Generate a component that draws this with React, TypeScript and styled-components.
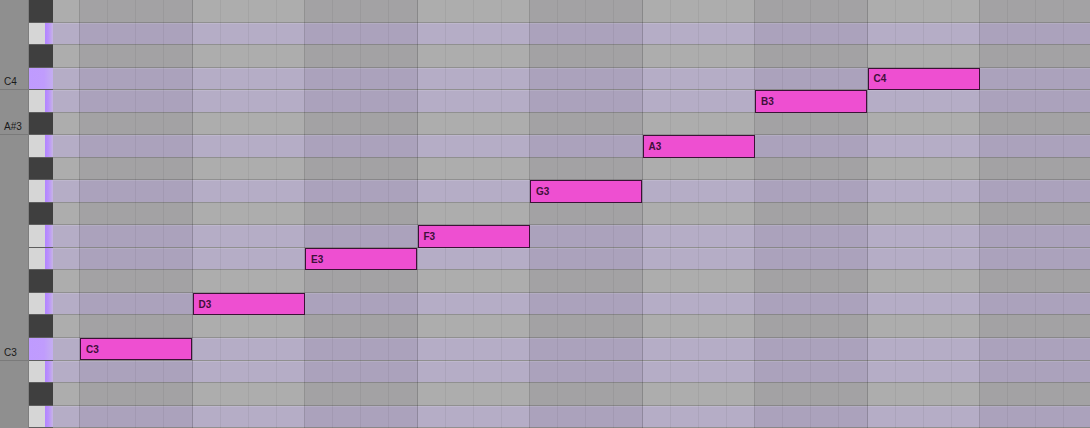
import styled, { createGlobalStyle, css } from "styled-components";

const GlobalStyle = createGlobalStyle`
  html, body {
    margin: 0;
    padding: 0;
    background: #999;
  }
  body {
    font-family: "Liberation Sans", Arial, sans-serif;
  }
`;

const ROW_COUNT = 19;
const ROW_H = 428 / ROW_COUNT;
const BEAT_W = 112.5;
const LEAD_W = 27;

type Key = { name: string; black: boolean; label?: boolean };

const keys: Key[] = [
  { name: "D#4", black: true },
  { name: "D4", black: false },
  { name: "C#4", black: true },
  { name: "C4", black: false, label: true },
  { name: "B3", black: false },
  { name: "A#3", black: true, label: true },
  { name: "A3", black: false },
  { name: "G#3", black: true },
  { name: "G3", black: false },
  { name: "F#3", black: true },
  { name: "F3", black: false },
  { name: "E3", black: false },
  { name: "D#3", black: true },
  { name: "D3", black: false },
  { name: "C#3", black: true },
  { name: "C3", black: false, label: true },
  { name: "B2", black: false },
  { name: "A#2", black: true },
  { name: "A2", black: false },
];

const melody = ["C3", "D3", "E3", "F3", "G3", "A3", "B3", "C4"];

const Roll = styled.div`
  display: flex;
  width: 1090px;
  height: 428px;
  overflow: hidden;
  background: #999;
`;

const LabelColumn = styled.div`
  width: 29px;
  flex-shrink: 0;
  display: flex;
  flex-direction: column;
  background: #8f8f8f;
  border-right: 1px solid #7e7e7e;
  box-sizing: border-box;
`;

const LabelCell = styled.div<{ $marked: boolean }>`
  flex: 1;
  display: flex;
  align-items: flex-end;
  padding: 0 0 2px 4px;
  box-sizing: border-box;
  font-size: 10px;
  color: #1a1a1a;
  border-bottom: 1px solid ${(p) => (p.$marked ? "#7a7a7a" : "transparent")};
`;

const KeyColumn = styled.div`
  width: 24px;
  flex-shrink: 0;
  display: flex;
  flex-direction: column;
  background: #555;
`;

const PianoKey = styled.div<{ $kind: "black" | "white" | "root" }>`
  flex: 1;
  box-sizing: border-box;
  border-bottom: 1px solid #5e5e5e;
  ${(p) =>
    p.$kind === "black"
      ? css`
          background: #3f3f3f;
        `
      : p.$kind === "root"
      ? css`
          background: linear-gradient(90deg, #bf9bff 0%, #c09cfd 62%, #c4aef0 100%);
        `
      : css`
          background: linear-gradient(
            90deg,
            #d6d6d6 0%,
            #d6d6d6 66%,
            #b386ff 68%,
            #b98ffc 80%,
            #c6b4e6 100%
          );
        `}
`;

const Grid = styled.div`
  position: relative;
  flex: 1;
  display: flex;
  flex-direction: column;
`;

const GridRow = styled.div<{ $black: boolean }>`
  flex: 1;
  box-sizing: border-box;
  background: ${(p) => (p.$black ? "#adadad" : "#b5adc6")};
  border-bottom: 1px solid #909090;
  border-top: 1px solid ${(p) => (p.$black ? "transparent" : "rgba(255,255,255,0.12)")};
`;

const BeatLayer = styled.div`
  position: absolute;
  inset: 0;
  display: flex;
  pointer-events: none;
`;

const Lead = styled.div`
  width: ${LEAD_W}px;
  flex-shrink: 0;
  box-sizing: border-box;
  border-right: 1px solid rgba(0, 0, 0, 0.16);
`;

const Beat = styled.div<{ $shaded: boolean }>`
  width: ${BEAT_W}px;
  flex-shrink: 0;
  display: flex;
  background: ${(p) => (p.$shaded ? "rgba(40, 30, 50, 0.07)" : "transparent")};
  border-right: 1px solid rgba(0, 0, 0, 0.16);
  box-sizing: border-box;
`;

const Step = styled.div`
  flex: 1;
  border-right: 1px solid rgba(0, 0, 0, 0.05);

  &:last-child {
    border-right: none;
  }
`;

const Note = styled.div`
  position: absolute;
  height: ${ROW_H}px;
  width: 112px;
  box-sizing: border-box;
  background: #ee4fd1;
  border: 1px solid #3b1236;
  display: flex;
  align-items: center;
  padding-left: 5px;
  font-size: 10px;
  font-weight: bold;
  color: #40103a;
`;

export default function App() {
  return (
    <>
      <GlobalStyle />
      <Roll>
        <LabelColumn>
          {keys.map((k) => (
            <LabelCell key={k.name} $marked={!!k.label}>
              {k.label ? k.name : null}
            </LabelCell>
          ))}
        </LabelColumn>
        <KeyColumn>
          {keys.map((k) => (
            <PianoKey
              key={k.name}
              $kind={k.black ? "black" : k.name.startsWith("C") ? "root" : "white"}
            />
          ))}
        </KeyColumn>
        <Grid>
          {keys.map((k) => (
            <GridRow key={k.name} $black={k.black} />
          ))}
          <BeatLayer>
            <Lead />
            {Array.from({ length: 9 }, (_, i) => (
              <Beat key={i} $shaded={i % 2 === 0}>
                <Step />
                <Step />
                <Step />
                <Step />
              </Beat>
            ))}
          </BeatLayer>
          {melody.map((name, i) => {
            const row = keys.findIndex((k) => k.name === name);
            return (
              <Note
                key={name}
                style={{ left: LEAD_W + i * BEAT_W, top: row * ROW_H }}
              >
                {name}
              </Note>
            );
          })}
        </Grid>
      </Roll>
    </>
  );
}
